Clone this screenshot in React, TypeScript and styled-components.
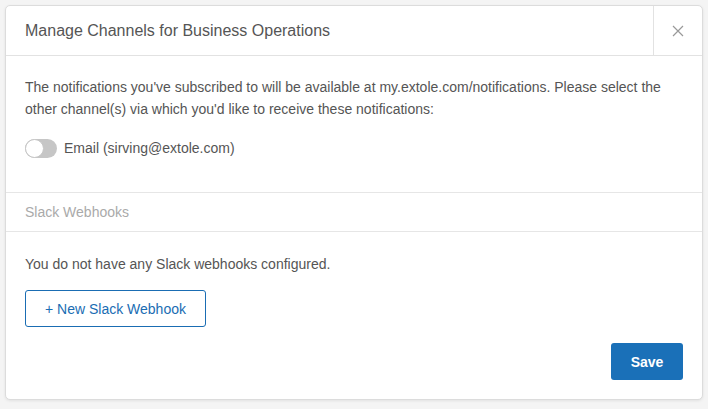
import React, { useState } from "react";
import styled, { createGlobalStyle } from "styled-components";

const GlobalStyle = createGlobalStyle`
    html, body {
        margin: 0;
        padding: 0;
        background: #f4f4f4;
        font-family: "Liberation Sans", Arial, sans-serif;
    }
    * {
        box-sizing: border-box;
    }
`;

const Backdrop = styled.div`
    padding: 5px 5px 8px 5px;
`;

const Modal = styled.div`
    width: 698px;
    background: #fff;
    border: 1px solid #dcdcdc;
    border-radius: 5px;
    box-shadow: 0 1px 3px rgba(0, 0, 0, 0.08);
    display: flex;
    flex-direction: column;
`;

const Header = styled.div`
    display: flex;
    align-items: stretch;
    height: 50px;
    border-bottom: 1px solid #e2e2e2;
`;

const Title = styled.h4`
    flex: 1;
    margin: 0;
    padding: 0 19px;
    display: flex;
    align-items: center;
    font-size: 16px;
    font-weight: 400;
    color: #555;
`;

const Close = styled.button`
    width: 49px;
    border: none;
    border-left: 1px solid #e2e2e2;
    background: transparent;
    display: flex;
    align-items: center;
    justify-content: center;
    cursor: pointer;
    padding: 0;
`;

const Section = styled.div<{ $pt: number; $pb: number }>`
    padding: ${({ $pt }) => $pt}px 19px ${({ $pb }) => $pb}px;
    font-size: 14px;
    line-height: 22px;
    color: #555;
`;

const Intro = styled.p`
    margin: 0 0 17px;
`;

const ToggleRow = styled.label`
    display: flex;
    align-items: center;
    gap: 7px;
    cursor: pointer;
`;

const Track = styled.span<{ $on: boolean }>`
    position: relative;
    width: 32px;
    height: 19px;
    border-radius: 10px;
    background: ${({ $on }) => ($on ? "#1a70b8" : "#c6c6c6")};
    transition: background 0.2s ease;
`;

const Knob = styled.span<{ $on: boolean }>`
    position: absolute;
    top: 0;
    left: ${({ $on }) => ($on ? "13px" : "0")};
    width: 19px;
    height: 19px;
    border-radius: 50%;
    background: #fff;
    border: 1px solid #c6c6c6;
    transition: left 0.2s ease;
`;

const SubHeader = styled.div`
    border-top: 1px solid #e6e6e6;
    border-bottom: 1px solid #e6e6e6;
    padding: 9px 19px 8px;
    font-size: 14px;
    line-height: 21px;
    color: #aaa;
`;

const Empty = styled.p`
    margin: 0 0 15px;
`;

const OutlineButton = styled.button`
    height: 37px;
    padding: 0 19px;
    border: 1px solid #1a6db3;
    border-radius: 3px;
    background: #fff;
    color: #1a6db3;
    font-family: inherit;
    font-size: 14px;
    cursor: pointer;
`;

const Footer = styled.div`
    display: flex;
    justify-content: flex-end;
    padding: 16px 19px 19px;
`;

const PrimaryButton = styled.button`
    width: 72px;
    height: 37px;
    border: none;
    border-radius: 3px;
    background: #1a70b8;
    color: #fff;
    font-family: inherit;
    font-size: 14px;
    font-weight: 700;
    cursor: pointer;
`;

export default function App() {
    const [email, setEmail] = useState(false);
    return (
        <Backdrop>
            <GlobalStyle />
            <Modal>
                <Header>
                    <Title>Manage Channels for Business Operations</Title>
                    <Close aria-label="Close">
                        <svg width="12" height="12" viewBox="0 0 12 12">
                            <path
                                d="M1 1 L11 11 M11 1 L1 11"
                                stroke="#999"
                                strokeWidth="1.2"
                            />
                        </svg>
                    </Close>
                </Header>

                <Section $pt={20} $pb={33}>
                    <Intro>
                        The notifications you've subscribed to will be available
                        at my.extole.com/notifications. Please select the other
                        channel(s) via which you'd like to receive these
                        notifications:
                    </Intro>
                    <ToggleRow onClick={() => setEmail(!email)}>
                        <Track $on={email}>
                            <Knob $on={email} />
                        </Track>
                        Email (sirving@extole.com)
                    </ToggleRow>
                </Section>

                <SubHeader>Slack Webhooks</SubHeader>

                <Section $pt={21} $pb={0}>
                    <Empty>You do not have any Slack webhooks configured.</Empty>
                    <OutlineButton>+ New Slack Webhook</OutlineButton>
                </Section>

                <Footer>
                    <PrimaryButton>Save</PrimaryButton>
                </Footer>
            </Modal>
        </Backdrop>
    );
}
